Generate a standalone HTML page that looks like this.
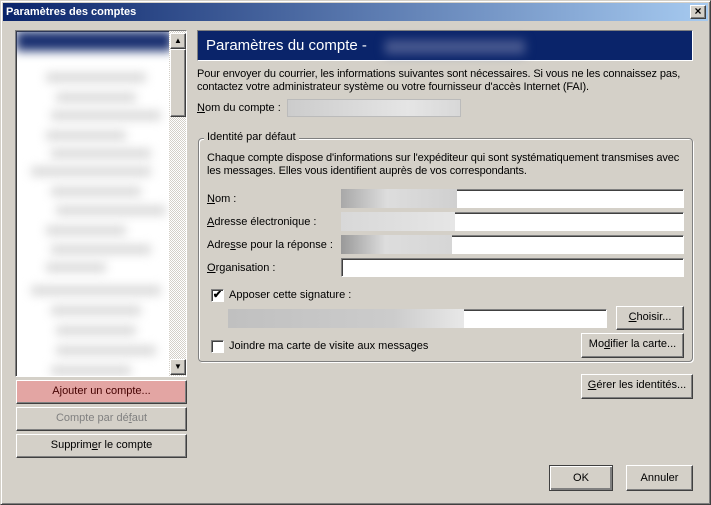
<!DOCTYPE html>
<html><head><meta charset="utf-8"><style>
*{box-sizing:border-box;margin:0;padding:0}
body{width:711px;height:505px;background:#d4d0c8;font:11px "Liberation Sans",sans-serif;color:#000;position:relative;overflow:hidden}
.a{position:absolute}
.win{left:0;top:0;width:711px;height:505px;border:1px solid;border-color:#d4d0c8 #404040 #404040 #d4d0c8;box-shadow:inset 1px 1px #fff,inset -1px -1px #808080}
.title{left:3px;top:3px;width:705px;height:18px;background:linear-gradient(90deg,#0a246a,#a6caf0);color:#fff;font-weight:bold;font-size:11px;padding:3px 0 0 3px}
.btn{position:absolute;background:#d4d0c8;border:1px solid;border-color:#fff #404040 #404040 #fff;box-shadow:inset -1px -1px #808080;text-align:center;line-height:21px}
.in{position:absolute;background:#fff;border:1px solid;border-color:#808080 #fff #fff #808080;box-shadow:inset 1px 1px #404040}
.ln{position:absolute;height:9px;background:#d6d6d6;filter:blur(5px)}
u{text-decoration:underline}
.cb{position:absolute;width:13px;height:13px;background:#fff;border:1px solid;border-color:#808080 #fff #fff #808080;box-shadow:inset 1px 1px #404040}
.p{letter-spacing:-0.12px}
</style></head><body>
<div class="a win"></div>
<div class="a title">Paramètres des comptes</div>
<div class="btn" style="left:690px;top:5px;width:16px;height:14px;line-height:11px;font-weight:bold;font-size:12px">×</div>

<!-- list -->
<div class="in" style="left:15px;top:30px;width:172px;height:347px;overflow:hidden">
 <div class="a" style="left:0;top:0;width:156px;height:20px;background:#1a3070;filter:blur(5px)"></div>
 <div class="ln" style="left:30px;top:42px;width:100px"></div>
 <div class="ln" style="left:40px;top:62px;width:80px"></div>
 <div class="ln" style="left:35px;top:80px;width:110px"></div>
 <div class="ln" style="left:30px;top:100px;width:80px"></div>
 <div class="ln" style="left:35px;top:118px;width:100px"></div>
 <div class="ln" style="left:15px;top:136px;width:120px"></div>
 <div class="ln" style="left:35px;top:156px;width:90px"></div>
 <div class="ln" style="left:40px;top:175px;width:110px"></div>
 <div class="ln" style="left:30px;top:195px;width:80px"></div>
 <div class="ln" style="left:35px;top:214px;width:100px"></div>
 <div class="ln" style="left:30px;top:232px;width:60px"></div>
 <div class="ln" style="left:15px;top:255px;width:130px"></div>
 <div class="ln" style="left:35px;top:275px;width:90px"></div>
 <div class="ln" style="left:40px;top:295px;width:80px"></div>
 <div class="ln" style="left:40px;top:315px;width:100px"></div>
 <div class="ln" style="left:35px;top:335px;width:80px"></div>
 <div class="a" style="left:153px;top:0;width:18px;height:347px;background:repeating-conic-gradient(#fff 0 25%,#d4d0c8 0 50%) 0 0/2px 2px"></div>
 <div class="btn" style="left:154px;top:2px;width:16px;height:16px;line-height:14px;font-size:8px">▲</div>
 <div class="btn" style="left:154px;top:18px;width:16px;height:68px"></div>
 <div class="btn" style="left:154px;top:328px;width:16px;height:16px;line-height:14px;font-size:8px">▼</div>
</div>
<div class="btn" style="left:16px;top:380px;width:171px;height:24px;background:#e3a5a3;color:#400">A<u>j</u>outer un compte...</div>
<div class="btn" style="left:16px;top:407px;width:171px;height:24px;color:#808080">Compte par dé<u>f</u>aut</div>
<div class="btn" style="left:16px;top:434px;width:171px;height:24px">Supprim<u>e</u>r le compte</div>

<!-- right -->
<div class="a" style="left:197px;top:30px;width:496px;height:31px;background:#0a246a;border:1px solid;border-color:#808080 #fff #fff #808080;color:#fff;font-size:15px;padding:6px 8px">Paramètres du compte -</div>
<div class="a" style="left:385px;top:40px;width:140px;height:14px;background:#4a5a90;filter:blur(5px)"></div>
<div class="a p" style="left:197px;top:68px;line-height:13px">Pour envoyer du courrier, les informations suivantes sont nécessaires. Si vous ne les connaissez pas,<br>contactez votre administrateur système ou votre fournisseur d'accès Internet (FAI).</div>
<div class="a" style="left:197px;top:102px"><u>N</u>om du compte :</div>
<div class="a" style="left:287px;top:99px;width:174px;height:18px;background:linear-gradient(90deg,#ccc,#e5e5e5 70%,#d8d8d8);border:1px solid #bbb"></div>

<div class="a" style="left:198px;top:138px;width:495px;height:224px;border:1px solid #808080;border-radius:4px;box-shadow:1px 1px #fff,inset 1px 1px #fff"></div>
<div class="a" style="left:204px;top:131px;background:#d4d0c8;padding:0 3px">Identité par défaut</div>
<div class="a p" style="left:207px;top:152px;line-height:13px">Chaque compte dispose d'informations sur l'expéditeur qui sont systématiquement transmises avec<br>les messages. Elles vous identifient auprès de vos correspondants.</div>
<div class="a" style="left:207px;top:193px"><u>N</u>om :</div>
<div class="a" style="left:207px;top:216px"><u>A</u>dresse électronique :</div>
<div class="a" style="left:207px;top:239px">Adre<u>s</u>se pour la réponse :</div>
<div class="a" style="left:207px;top:262px"><u>O</u>rganisation :</div>
<div class="in" style="left:341px;top:189px;width:343px;height:19px"></div>
<div class="a" style="left:341px;top:189px;width:116px;height:19px;background:linear-gradient(90deg,#a8a8a8,#ddd 40%,#d0d0d0)"></div>
<div class="in" style="left:341px;top:212px;width:343px;height:19px"></div>
<div class="a" style="left:341px;top:212px;width:114px;height:19px;background:linear-gradient(90deg,#d8d8d8,#e6e6e6)"></div>
<div class="in" style="left:341px;top:235px;width:343px;height:19px"></div>
<div class="a" style="left:341px;top:235px;width:111px;height:19px;background:linear-gradient(90deg,#999,#ddd 40%,#d6d6d6)"></div>
<div class="in" style="left:341px;top:258px;width:343px;height:19px"></div>

<div class="cb" style="left:211px;top:289px;font-size:11px;line-height:10px;text-align:center;font-weight:bold">✔</div>
<div class="a" style="left:229px;top:289px">Apposer cette signature :</div>
<div class="in" style="left:228px;top:309px;width:379px;height:19px"></div>
<div class="a" style="left:228px;top:309px;width:236px;height:19px;background:linear-gradient(90deg,#c0c0c0,#ccc 70%,#e8e8e8)"></div>
<div class="btn" style="left:616px;top:306px;width:68px;height:24px"><u>C</u>hoisir...</div>
<div class="cb" style="left:211px;top:340px"></div>
<div class="a" style="left:229px;top:340px">Joindre ma carte de visite aux messages</div>
<div class="btn" style="left:581px;top:333px;width:103px;height:25px">Mo<u>d</u>ifier la carte...</div>
<div class="btn" style="left:581px;top:374px;width:112px;height:25px"><u>G</u>érer les identités...</div>

<div class="btn" style="left:549px;top:465px;width:64px;height:26px;line-height:24px;border-color:#404040;box-shadow:inset 1px 1px #fff,inset -2px -2px #808080">OK</div>
<div class="btn" style="left:626px;top:465px;width:67px;height:26px;line-height:24px">Annuler</div>
</body></html>
